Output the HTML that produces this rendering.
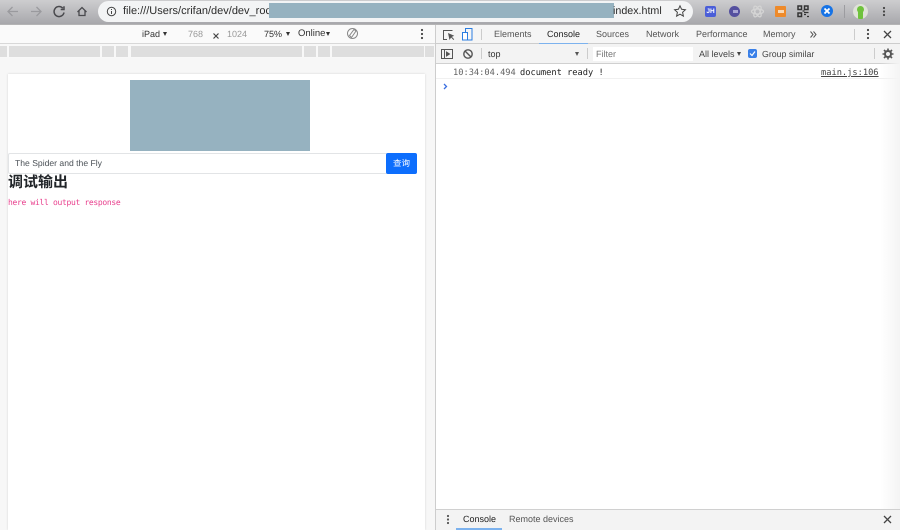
<!DOCTYPE html>
<html><head><meta charset="utf-8"><style>
html,body{margin:0;padding:0;width:900px;height:530px;overflow:hidden;background:#fff}
body{position:relative;font-family:"Liberation Sans","Noto Sans CJK SC",sans-serif;color:#333;text-rendering:geometricPrecision;filter:blur(.3px)}
.a{position:absolute;white-space:nowrap}
.t{font-size:9px;line-height:12px;color:#333}
.m{font-family:"DejaVu Sans Mono","Liberation Mono",monospace}
.g{background:#dedede;top:46px;height:11px}
.v{position:absolute;width:0;height:0;border-left:2.500px solid transparent;border-right:2.500px solid transparent;border-top:4.500px solid #333}
svg{position:absolute;overflow:visible}
</style></head><body>
<!-- browser top bar -->
<div class="a" style="left:0;top:0;width:900px;height:25px;background:linear-gradient(#cdcdcf,#a8a8ac 95%,#bbb)"></div>
<div class="a" style="left:98px;top:1px;width:595px;height:21px;border-radius:11px;background:#f3f4f5"></div>
<svg style="left:0;top:0" width="100" height="25" fill="none" stroke-width="1.300">
<path d="M8 11.500h10M12.500 7l-4.500 4.500 4.500 4.500" stroke="#9a9a9e"/>
<path d="M31 11.500h10M36.500 7l4.500 4.500-4.500 4.500" stroke="#9a9a9e"/>
<path d="M62.800 8.200a5 5 0 1 0 1.200 4.300M64 6.200v3.300h-3.300" stroke="#4a4a4e" stroke-width="1.500"/>
<path d="M77.500 12l4.500-4.500 4.500 4.500M79 10.800v4.700h6v-4.700" stroke="#4a4a4e" stroke-width="1.300"/>
</svg>
<svg style="left:106px;top:6px" width="12" height="12" fill="none" stroke="#444"><circle cx="5.500" cy="5.500" r="4.200"/><path d="M5.500 5v3M5.500 3v1"/></svg>
<div class="a" style="left:123px;top:4px;font-size:11px;line-height:15px;color:#2a2a2a">file:///Users/crifan/dev/dev_root</div>
<div class="a" style="left:269px;top:3px;width:345px;height:15px;background:#96b2c0"></div>
<div class="a" style="left:613px;top:4px;font-size:10.700px;line-height:15px;color:#2a2a2a">index.html</div>
<svg style="left:674px;top:5px" width="12" height="12" fill="none" stroke="#444"><path d="M6 .8l1.600 3.500 3.800.4-2.800 2.600.8 3.800L6 9.200l-3.400 1.900.8-3.800L.6 4.700l3.800-.4z"/></svg>
<!-- extensions -->
<div class="a" style="left:705px;top:6px;width:11px;height:11px;border-radius:2px;background:#4a5ed8;color:#fff;font-size:6.500px;font-weight:bold;line-height:11px;text-align:center">JH</div>
<div class="a" style="left:729px;top:6px;width:11px;height:11px;border-radius:50%;background:#55509f"></div>
<div class="a" style="left:733px;top:10px;width:5px;height:3px;background:#a9a6d4"></div>
<svg style="left:751px;top:5px" width="13" height="13" fill="none" stroke="#d5d5d5" stroke-width="1.200"><ellipse cx="6.500" cy="6.500" rx="6" ry="2.500"/><ellipse cx="6.500" cy="6.500" rx="6" ry="2.500" transform="rotate(60 6.500 6.500)"/><ellipse cx="6.500" cy="6.500" rx="6" ry="2.500" transform="rotate(120 6.500 6.500)"/></svg>
<div class="a" style="left:775px;top:6px;width:11px;height:11px;border-radius:1px;background:#ee8a2a"></div>
<div class="a" style="left:778px;top:10px;width:6px;height:3px;background:#f9d9b5"></div>
<svg style="left:797px;top:5px" width="12" height="13" fill="none" stroke="#333">
<rect x="1" y="1" width="3.500" height="3.500" stroke-width="1.500"/><rect x="7.500" y="1" width="3.500" height="3.500" stroke-width="1.500"/><rect x="1" y="8" width="3.500" height="3.500" stroke-width="1.500"/>
<path d="M7 7.500h4.500M7 9.500h2M10 11.500h2M5.500 6h2" stroke-width="1.300"/></svg>
<div class="a" style="left:821px;top:5px;width:12px;height:12px;border-radius:50%;background:#1673e6"></div>
<svg style="left:821px;top:5px" width="12" height="12" stroke="#fff" stroke-width="1.800"><path d="M3.500 3.500l5 5M8.500 3.500l-5 5"/></svg>
<div class="a" style="left:844px;top:5px;width:1px;height:13px;background:#9c9ca0"></div>
<div class="a" style="left:853px;top:4px;width:15px;height:15px;border-radius:50%;background:#dfe2d8"></div>
<div class="a" style="left:857px;top:6px;width:7px;height:7px;border-radius:50%;background:#6fc23c"></div>
<div class="a" style="left:858px;top:11px;width:5px;height:8px;border-radius:1px;background:#6fc23c"></div>
<svg style="left:882px;top:7px" width="4" height="12" fill="#444"><circle cx="2" cy="1" r="1.100"/><circle cx="2" cy="4.500" r="1.100"/><circle cx="2" cy="8" r="1.100"/></svg>
<!-- device toolbar -->
<div class="a" style="left:0;top:25px;width:435px;height:18px;background:#fafafa;border-bottom:1px solid #d8d8d8"></div>
<div class="a t" style="left:142px;top:28px">iPad</div>
<div class="v" style="left:163px;top:32px"></div>
<div class="a t" style="left:188px;top:28px;color:#999">768</div>
<svg style="left:213px;top:33px" width="7" height="7" stroke="#444" stroke-width="1.200"><path d="M.5.500l5 5M5.500.500l-5 5"/></svg>
<div class="a t" style="left:227px;top:28px;color:#999">1024</div>
<div class="a t" style="left:264px;top:28px">75%</div>
<div class="v" style="left:286px;top:32px"></div>
<div class="a t" style="left:298px;top:28px;font-size:9.500px">Online</div>
<div class="v" style="left:326px;top:32px"></div>
<svg style="left:347px;top:28px" width="12" height="12" fill="none" stroke="#888"><circle cx="5.500" cy="5.500" r="5"/><path d="M2.500 7.500L7 1.500l2 1.500L4.500 9.500z" fill="#fafafa"/></svg>
<svg style="left:420px;top:29px" width="4" height="12" fill="#444"><circle cx="2" cy="1" r="1.100"/><circle cx="2" cy="5" r="1.100"/><circle cx="2" cy="9" r="1.100"/></svg>
<!-- media bar -->
<div class="a" style="left:0;top:44px;width:435px;height:14px;background:#f8f8f8"></div>
<div class="a g" style="left:0;width:7px"></div>
<div class="a g" style="left:9px;width:91px"></div>
<div class="a g" style="left:102px;width:12px"></div>
<div class="a g" style="left:116px;width:12px"></div>
<div class="a g" style="left:131px;width:171px"></div>
<div class="a g" style="left:304px;width:12px"></div>
<div class="a g" style="left:318px;width:12px"></div>
<div class="a g" style="left:332px;width:92px"></div>
<div class="a g" style="left:425px;width:9px"></div>
<!-- viewport -->
<div class="a" style="left:0;top:58px;width:435px;height:472px;background:#f7f7f7"></div>
<div class="a" style="left:8px;top:74px;width:417px;height:456px;background:#fff;box-shadow:0 0 2px rgba(0,0,0,.15)"></div>
<div class="a" style="left:130px;top:80px;width:180px;height:71px;background:#96b2c0"></div>
<div class="a" style="left:8px;top:153px;width:377px;height:19px;border:1px solid #e2e4e6;border-radius:2px 0 0 2px;background:#fff"></div>
<div class="a" style="left:15px;top:157px;font-size:8.600px;line-height:12px;color:#4a5056">The Spider and the Fly</div>
<div class="a" style="left:386px;top:153px;width:31px;height:21px;border-radius:2px;background:#0d6efd;color:#fff;font-size:8.500px;line-height:21px;text-align:center">查询</div>
<div class="a" style="left:8px;top:174px;font-size:15px;line-height:18px;color:#212529;font-weight:bold">调试输出</div>
<div class="a m" style="left:8px;top:197px;font-size:8px;line-height:11px;color:#e83e8c;letter-spacing:-.32px">here will output response</div>
<div class="a" style="left:435px;top:25px;width:1px;height:505px;background:#cdcdcd"></div>
<!-- devtools tabs -->
<div class="a" style="left:436px;top:25px;width:464px;height:18px;background:#f5f5f5;border-bottom:1px solid #cdcdcd"></div>
<svg style="left:443px;top:28px" width="32" height="13" fill="none">
<path d="M9.500 2.500H.5v9h3.500" stroke="#555"/><path d="M5 5l1.500 7 1.600-2.500L10.500 12l.7-.7-2.300-2.400 2.300-1.200z" fill="#555"/>
<rect x="19.500" y="4.500" width="5" height="7.500" stroke="#2a7de1" fill="#fff"/><path d="M22.500 4V.5h6.500V12h-4.500" stroke="#2a7de1"/>
</svg>
<div class="a" style="left:481px;top:29px;width:1px;height:11px;background:#ccc"></div>
<div class="a t" style="left:494px;top:28px;color:#555">Elements</div>
<div class="a t" style="left:547px;top:28px;color:#222">Console</div>
<div class="a" style="left:539px;top:43px;width:49px;height:2px;background:#7cb2ee"></div>
<div class="a t" style="left:596px;top:28px;color:#555">Sources</div>
<div class="a t" style="left:646px;top:28px;color:#555">Network</div>
<div class="a t" style="left:696px;top:28px;color:#555">Performance</div>
<div class="a t" style="left:763px;top:28px;color:#555">Memory</div>
<svg style="left:810px;top:31px" width="8" height="7" fill="none" stroke="#555" stroke-width="1"><path d="M.5.500l2.500 3-2.500 3M3.500 .500l2.500 3-2.500 3"/></svg>
<div class="a" style="left:854px;top:29px;width:1px;height:11px;background:#ccc"></div>
<svg style="left:866px;top:29px" width="4" height="12" fill="#444"><circle cx="2" cy="1" r="1.100"/><circle cx="2" cy="5" r="1.100"/><circle cx="2" cy="9" r="1.100"/></svg>
<svg style="left:883px;top:30px" width="9" height="9" stroke="#444" stroke-width="1.300"><path d="M1 1l7 7M8 1l-7 7"/></svg>
<!-- console toolbar -->
<div class="a" style="left:436px;top:44px;width:464px;height:19px;background:#f3f3f3;border-bottom:1px solid #d0d0d0"></div>
<svg style="left:441px;top:48px" width="36" height="13" fill="none" stroke="#555">
<rect x=".5" y="1.500" width="11" height="9"/><path d="M3.500 1.500v9"/><path d="M5.500 4l3 2-3 2z" fill="#555"/>
<circle cx="27" cy="6" r="4.200" stroke-width="1.400"/><path d="M24 3l6 6" stroke-width="1.400"/>
</svg>
<div class="a" style="left:481px;top:48px;width:1px;height:11px;background:#ccc"></div>
<div class="a t" style="left:488px;top:48px">top</div>
<div class="v" style="left:575px;top:52px;border-top-color:#555"></div>
<div class="a" style="left:587px;top:48px;width:1px;height:11px;background:#ccc"></div>
<div class="a" style="left:593px;top:47px;width:100px;height:14px;background:#fff"></div>
<div class="a t" style="left:596px;top:48px;color:#777">Filter</div>
<div class="a t" style="left:699px;top:48px;color:#444">All levels</div>
<div class="v" style="left:737px;top:52px;border-top-color:#444"></div>
<div class="a" style="left:748px;top:49px;width:9px;height:9px;border-radius:2px;background:#3a80e8"></div>
<svg style="left:748px;top:49px" width="9" height="9" fill="none" stroke="#fff" stroke-width="1.200"><path d="M2 4.500l2 2 3-4"/></svg>
<div class="a t" style="left:762px;top:48px;font-size:8.800px;color:#444">Group similar</div>
<div class="a" style="left:874px;top:48px;width:1px;height:11px;background:#ccc"></div>
<svg style="left:882px;top:48px" width="12" height="12" fill="none"><circle cx="6" cy="6" r="3" stroke="#555" stroke-width="2"/><path d="M6 .5v2M6 9.500v2M.5 6h2M9.500 6h2M2 2l1.500 1.500M8.500 8.500L10 10M10 2L8.500 3.500M3.500 8.500L2 10" stroke="#555" stroke-width="1.600"/></svg>
<!-- console messages -->
<div class="a m" style="left:453px;top:67px;font-size:8.700px;line-height:12px;color:#666">10:34:04.494</div>
<div class="a m" style="left:520px;top:67px;font-size:8.700px;line-height:12px;color:#222">document ready !</div>
<div class="a m" style="left:821px;top:67px;font-size:8.700px;line-height:12px;color:#444;text-decoration:underline">main.js:106</div>
<div class="a" style="left:436px;top:78px;width:464px;height:1px;background:#f0f0f0"></div>
<svg style="left:443px;top:83px" width="5" height="7" fill="none" stroke="#3a6fe0" stroke-width="1.300"><path d="M1 1l2.500 2.500L1 6"/></svg>
<div class="a" style="left:880px;top:63px;width:20px;height:446px;background:linear-gradient(90deg,rgba(244,244,244,0),#f4f4f4)"></div>
<!-- drawer -->
<div class="a" style="left:436px;top:509px;width:464px;height:21px;background:#f3f3f3;border-top:1px solid #d0d0d0;box-sizing:border-box"></div>
<svg style="left:446px;top:515px" width="4" height="12" fill="#555"><circle cx="2" cy="1" r="1.100"/><circle cx="2" cy="4.500" r="1.100"/><circle cx="2" cy="8" r="1.100"/></svg>
<div class="a t" style="left:463px;top:513px;color:#222">Console</div>
<div class="a" style="left:456px;top:528px;width:46px;height:2px;background:#7cb2ee"></div>
<div class="a t" style="left:509px;top:513px;color:#555">Remote devices</div>
<svg style="left:883px;top:515px" width="9" height="9" stroke="#444" stroke-width="1.300"><path d="M1 1l7 7M8 1l-7 7"/></svg>
</body></html>
